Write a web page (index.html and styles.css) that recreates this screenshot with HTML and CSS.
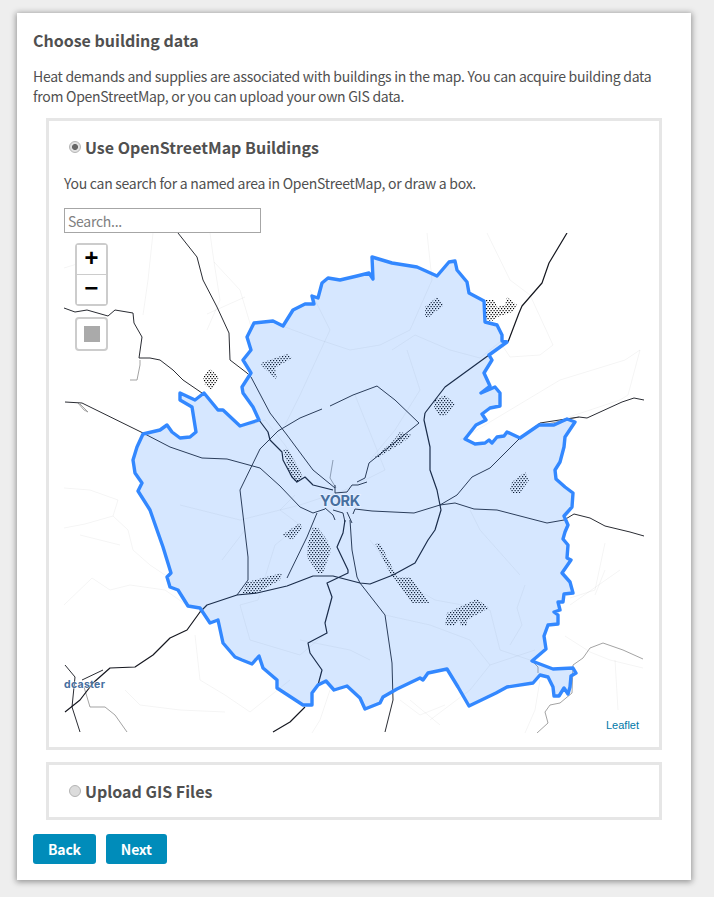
FILE: index.html
```html
<!DOCTYPE html>
<html lang="en">
<head>
<meta charset="utf-8">
<title>Choose building data</title>
<link rel="stylesheet" href="styles.css">
</head>
<body>
<main class="card">
  <h1 class="title">Choose building data</h1>
  <p class="intro">Heat demands and supplies are associated with buildings in the map. You can acquire building data from OpenStreetMap, or you can upload your own GIS data.</p>
  <section class="panel panel-map">
    <label class="choice"><input class="radio" type="radio" name="source" checked><span>Use OpenStreetMap Buildings</span></label>
    <p class="hint">You can search for a named area in OpenStreetMap, or draw a box.</p>
    <input class="search" type="text" placeholder="Search...">
    <div class="map">
      <svg class="map-art" viewBox="64 233 581 500" width="581" height="500" aria-hidden="true">
        <defs>
          <pattern id="dots" width="3" height="4" patternUnits="userSpaceOnUse">
            <rect x="0" y="0" width="1.2" height="1.2" fill="#000"/>
            <rect x="1.5" y="2" width="1.2" height="1.2" fill="#000"/>
          </pattern>
        </defs>
        <g class="minor">
          <path d="M210 233L214 262 220 300 207 330M214 262L240 290 252 330M207 314L245 297"/>
          <path d="M153 233L148 280 143 315M90 260L64 268"/>
          <path d="M64 488L90 490 118 500 113 516 85 524 64 528M113 516L128 530 133 550 150 565 165 575M64 605L92 578 110 590 130 585 165 590 188 606"/>
          <path d="M195 635L200 680 225 695 250 712 265 700 290 680M125 690L140 705 180 710 225 712M330 690L320 720 312 733"/>
          <path d="M427 233L432 280 410 330 380 345 350 350 320 340 285 327M407 350L420 390 395 430 370 460M392 350L415 335 450 350 480 358 500 342"/>
          <path d="M487 233L510 280 530 295 553 345 540 355 510 357 500 342M460 440L560 380 625 360 640 350 628 395 620 400 560 420"/>
          <path d="M250 425L265 420 285 445 300 470M295 495L280 510 300 525 275 545 258 600 240 605 250 640 300 655 330 630M180 505L240 520 300 505 345 490M222 560L245 530"/>
          <path d="M370 540L400 580 435 600 490 610 500 650 545 665M385 615L430 625 470 640 490 665 470 690 430 720M490 665L535 650M525 585L517 608 522 625 510 645"/>
          <path d="M605 543L595 590 570 598M570 605L620 570M595 595L605 570M565 636L590 652 610 660 643 668M615 660L618 710M540 680L535 710 525 733M410 700L440 725M445 705L420 715 400 700"/>
          <path d="M80 535L120 545M310 290L330 330 300 395 285 425M355 395L385 470 345 490M300 640L350 650 370 660M470 510L480 530 520 575"/>
        </g>
        <g class="road-thin">
          <path d="M130 380L137 380 140 365 140 360M78 403L84 410 88 412 80 404M84 687L90 707 105 707 115 715 127 732"/>
          <path d="M643 659L623 650 603 643 590 648 583 658 573 665 572 693 560 703 550 705 545 712 548 723 537 733M532 661L538 667 538 673"/>
          <path d="M333 460L330 478 336 488M543 425L579 417"/>
        </g>
        <g class="road-mid">
          <path d="M355 509L372 511 414 513 440 505 455 503 474 509 497 510 547 523 564 520 574 514 590 518 605 526 630 532 644 536"/>
          <path d="M440 505L457 495 472 477 490 468 520 438 540 423 579 417 587 418 622 402 634 398 644 400"/>
          <path d="M353 395L377 386 395 400 419 423 389 447 369 463 365 478 357 482"/>
          <path d="M237 595L248 580 248 557 240 490 260 449 278 431 300 418 322 409M330 406L353 395"/>
          <path d="M65 402L82 403 143 433 170 447 202 458 227 459 260 468 280 486 300 507 313 513 325 509"/>
          <path d="M230 360L247 373 251 377 270 413 287 435 313 470 335 488"/>
          <path d="M317 513L307 537 287 578"/>
          <path d="M350 520L352 550 357 577 360 583 385 615 392 663 393 700 385 732"/>
          <path d="M178 233L197 257 203 280 217 307 229 333 230 360"/>
          <path d="M64 308L75 312 87 310 108 316 115 310 133 313 134 323 142 337 139 358 150 358 160 360 173 370 183 380 202 393"/>
          <path d="M65 665L75 677 72 707 80 732M82 680L103 670"/>
          <path d="M335 485L335 493 347 492 352 485 358 485 367 482M325 508L333 515 335 520M333 510L343 513 345 522M347 512L352 523M355 509L353 514"/>
        </g>
        <g class="road">
          <path d="M65 712L80 700 93 683 110 668 135 667 153 655 170 638 187 630 200 612 207 605 237 595 257 593 287 586 313 576 333 576 360 583 370 584 393 575 415 563 428 540 435 530 441 510 437 490 430 470 430 447 424 420 425 413"/>
          <path d="M425 413L445 387 489 355M508 342L519 313 522 306 542 283 549 263 567 233"/>
          <path d="M259 420L268 432 270 440 282 452 283 460 292 477 297 482 305 477 313 485 333 490"/>
          <path d="M345 520L343 533 337 547 348 570 348 573 327 583 332 597 325 623 327 633 308 643 310 653 322 670 318 685"/>
          <path d="M305 707L290 722 273 732"/>
        </g>
        <g class="hatch">
          <path d="M425 317L425 307 437 297 444 305 429 317Z"/>
          <path d="M486 300L494 300 497 307 505 305 507 297 517 305 512 312 497 317 492 321 486 320Z"/>
          <path d="M434 407L435 400 445 395 455 404 445 416 440 416Z"/>
          <path d="M394 440L400 432 412 435 402 443 377 458 374 458Z"/>
          <path d="M510 490L512 482 525 472 529 480 520 493 512 493Z"/>
          <path d="M375 543L380 543 397 577 410 577 430 603 412 603 397 582 390 573Z"/>
          <path d="M445 625L447 613 477 599 489 608 467 620 467 626 460 626 460 620 453 626Z"/>
          <path d="M203 377L210 369 219 377 212 390 205 385Z"/>
          <path d="M261 363L287 354 292 358 275 368 277 380 262 366Z"/>
          <path d="M283 449L288 449 303 477 297 483 290 475Z"/>
          <path d="M282 535L300 523 302 528 292 540Z"/>
          <path d="M313 527L318 528 327 540 331 550 323 573 318 573 307 557 308 543Z"/>
          <path d="M242 593L247 582 282 573 280 580 257 593Z"/>
        </g>
        <path class="boundary" d="M372 257L392 263 417 267 437 276 449 262 455 261 457 270 467 282 469 293 484 301 485 322 497 325 502 335 502 341 507 342 489 355 492 360 484 373 490 386 481 393 495 387 500 393 500 406 490 408 482 414 486 420 476 425 465 439 475 444 485 443 489 440 492 443 497 437 504 436 507 432 520 438 539 425 554 425 567 419 575 422 565 437 564 447 560 462 555 470 556 479 565 487 573 493 572 507 564 516 568 525 565 532 563 539 568 545 567 558 571 560 562 573 570 582 573 593 564 594 563 602 558 602 560 610 554 612 558 615 558 624 548 625 544 636 546 649 532 661 553 669 573 668 576 673 571 676 570 687 568 694 564 688 559 696 554 696 553 687 548 677 540 675 533 683 507 687 496 693 469 706 458 687 447 669 428 673 423 680 420 678 397 689 383 697 380 703 365 709 360 698 347 686 334 690 326 681 318 685 312 693 312 705 303 705 277 688 277 680 263 668 259 656 252 664 242 660 235 657 223 643 218 620 210 623 200 608 188 606 178 590 170 587 167 577 171 573 163 547 157 530 150 510 138 491 142 483 135 473 133 460 137 447 143 434 160 430 167 425 172 432 180 438 190 437 196 432 192 407 180 400 180 393 195 400 204 393 218 410 223 410 240 426 259 420 253 407 243 393 242 387 251 373 243 360 251 350 247 337 254 323 273 321 283 326 293 310 305 304 314 304 312 296 318 298 322 283 328 278 340 280 357 276 369 273 373 279Z"/>
        <text class="label label-york" x="340" y="505.5" text-anchor="middle">YORK</text>
        <text class="label label-town" x="64" y="688">dcaster</text>
      </svg>
      <div class="zoom-bar">
        <button class="zoom-btn zoom-in" type="button">+</button>
        <button class="zoom-btn" type="button">−</button>
      </div>
      <div class="draw-bar"><span class="draw-square"></span></div>
      <a class="attribution" href="#">Leaflet</a>
    </div>
  </section>
  <section class="panel panel-upload">
    <label class="choice"><input class="radio" type="radio" name="source"><span>Upload GIS Files</span></label>
  </section>
  <div class="actions">
    <button class="btn" type="button">Back</button>
    <button class="btn" type="button">Next</button>
  </div>
</main>
</body>
</html>
```

FILE: styles.css
```css
* { box-sizing: border-box; }
html, body { margin: 0; }
body {
  background: #eeeeee;
  padding: 13px 23px 17px 17px;
  font-family: "Noto Sans CJK SC", "Noto Sans", sans-serif;
  font-size: 14px;
  letter-spacing: -0.27px;
  color: #505050;
}
.card {
  background: #fff;
  height: 867px;
  padding: 17px 16px 0;
  box-shadow: 0 1px 6px 1px rgba(0, 0, 0, 0.38);
}
.title {
  margin: 0;
  font-size: 16px;
  line-height: 20px;
  font-weight: 700;
  letter-spacing: 0;
}
.intro {
  margin: 17px 0 0;
  line-height: 19.5px;
}
.panel {
  margin-left: 13px;
  width: 616px;
  border: 3px solid #e6e6e6;
  background: #fff;
}
.panel-map {
  margin-top: 12px;
  height: 632px;
  padding: 13px 15px 0;
}
.panel-upload {
  margin-top: 12px;
  height: 58px;
  padding: 13px 20px 0;
}
.choice {
  display: flex;
  align-items: center;
  gap: 4px;
  height: 26px;
  font-size: 16px;
  font-weight: 700;
  letter-spacing: 0;
  padding-left: 5px;
}
.panel-upload .choice { padding-left: 0; }
.radio {
  appearance: none;
  width: 12px;
  height: 12px;
  margin: 0;
  border-radius: 50%;
  border: 1px solid #b4b4b4;
  background: #dcdcdc;
}
.radio:checked {
  background: radial-gradient(circle, #666 0, #666 2.6px, #e2e2e2 3.4px);
}
.hint {
  margin: 13px 0 0;
  line-height: 20px;
}
.search {
  display: block;
  margin-top: 15px;
  width: 197px;
  height: 25px;
  border: 1px solid #a6a6a6;
  padding: 0 3px;
  font: inherit;
  letter-spacing: inherit;
  color: #505050;
  outline: 0;
}
.search::placeholder { color: #808080; opacity: 1; }
.map {
  position: relative;
  width: 581px;
  height: 500px;
  overflow: hidden;
  background: #fff;
}
.map-art { display: block; }
.minor path { fill: none; stroke: #000; stroke-opacity: 0.045; stroke-width: 1; }
.road-thin path { fill: none; stroke: #999; stroke-width: 0.9; }
.road-mid path { fill: none; stroke: #2a2c33; stroke-width: 1; stroke-linejoin: round; }
.road path { fill: none; stroke: #15171f; stroke-width: 1.2; stroke-linejoin: round; }
.hatch path { fill: url(#dots); }
.boundary {
  fill: #3388ff;
  fill-opacity: 0.2;
  stroke: #3388ff;
  stroke-width: 3.4;
  stroke-linejoin: round;
}
.label {
  font-family: "Inter", sans-serif;
  font-weight: 700;
  fill: #466f9f;
  stroke: #fff;
  stroke-opacity: 0.45;
  stroke-width: 1.5;
  paint-order: stroke;
}
.label-york { font-size: 14.5px; }
.label-town { font-size: 10.5px; letter-spacing: 0.3px; }
.zoom-bar {
  position: absolute;
  left: 11px;
  top: 10px;
  width: 33px;
  height: 63px;
  border: 2px solid #ccc;
  border-radius: 4px;
  background: #fff;
}
.zoom-btn {
  display: block;
  width: 29px;
  height: 29px;
  padding: 0;
  border: 0;
  background: #fff;
  font-family: "Liberation Mono", monospace;
  font-size: 24px;
  font-weight: 700;
  letter-spacing: 0;
  line-height: 29px;
  color: #000;
}
.zoom-in { height: 30px; border-bottom: 1px solid #ccc; }
.draw-bar {
  position: absolute;
  left: 11px;
  top: 84px;
  width: 33px;
  height: 34px;
  border: 2px solid #ccc;
  border-radius: 4px;
  background: #fff;
  display: flex;
  align-items: center;
  justify-content: center;
}
.draw-square { width: 16px; height: 16px; background: #aaa; }
.attribution {
  position: absolute;
  right: 6px;
  bottom: 1px;
  font-family: "Liberation Sans", sans-serif;
  font-size: 11px;
  line-height: 14px;
  letter-spacing: 0;
  color: #0078a8;
  text-decoration: none;
}
.actions {
  display: flex;
  gap: 10px;
  margin-top: 14px;
}
.btn {
  height: 30px;
  padding: 0 15px;
  border: 0;
  border-radius: 3px;
  background: #008cba;
  color: #fff;
  font: inherit;
  font-weight: 700;
  letter-spacing: -0.2px;
}
```
